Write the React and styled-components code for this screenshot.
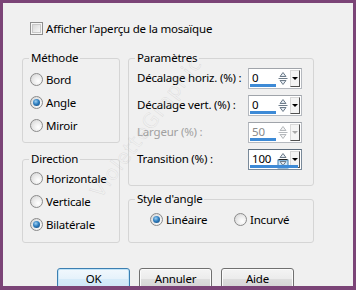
import React from 'react';
import styled, { createGlobalStyle } from 'styled-components';

const GlobalStyle = createGlobalStyle`
  html, body {
    margin: 0;
    padding: 0;
  }
  body {
    font-family: "Noto Sans", "Open Sans", sans-serif;
    font-size: 11.5px;
    letter-spacing: -0.2px;
    color: #000;
  }
`;

const Dialog = styled.div`
  position: relative;
  width: 356px;
  height: 290px;
  box-sizing: border-box;
  border: 3px solid #7b4477;
  border-bottom-width: 4px;
  background: #f0f0f0;
  overflow: hidden;
  display: flex;
  flex-direction: column;
  padding: 19px 0 0 19px;
`;

const CheckRow = styled.label`
  display: flex;
  align-items: center;
  gap: 3px;
  height: 13px;
  margin-left: 8px;
  line-height: 13px;
`;

const CheckBox = styled.span`
  width: 13px;
  height: 13px;
  box-sizing: border-box;
  border: 1px solid #8f8f8f;
  background: linear-gradient(135deg, #cfcfcf 0%, #f2f2f2 70%, #ffffff 100%);
  box-shadow: inset 0 0 0 1px #f6f6f6, inset 0 0 0 2px #c8c8c8;
`;

const Columns = styled.div`
  display: flex;
  gap: 8px;
  margin-top: 15px;
`;

const Column = styled.div`
  width: ${(p) => p.w}px;
  display: flex;
  flex-direction: column;
  gap: ${(p) => p.gap}px;
`;

const Group = styled.fieldset`
  margin: 0;
  padding: 0;
  min-width: 0;
  box-sizing: border-box;
  height: ${(p) => p.h}px;
  border: 1px solid #d5d5d5;
  border-radius: 3px;
`;

const Legend = styled.legend`
  margin-left: 6px;
  padding: 0 2px;
  line-height: 16px;
`;

const RadioList = styled.div`
  display: flex;
  flex-direction: ${(p) => (p.row ? 'row' : 'column')};
  padding: ${(p) => p.pad};
`;

const RadioRow = styled.label`
  display: flex;
  align-items: center;
  gap: 3px;
  height: 23px;
  width: ${(p) => (p.w ? `${p.w}px` : 'auto')};
`;

const RadioCircle = styled.span`
  position: relative;
  width: 13px;
  height: 13px;
  box-sizing: border-box;
  border-radius: 50%;
  border: 1px solid #8b8b8b;
  background: radial-gradient(circle at 65% 65%, #ffffff 0%, #ececec 45%, #cfcfcf 100%);
  flex-shrink: 0;

  &::after {
    content: '';
    display: ${(p) => (p.checked ? 'block' : 'none')};
    position: absolute;
    left: 2px;
    top: 2px;
    width: 7px;
    height: 7px;
    border-radius: 50%;
    background: radial-gradient(circle at 40% 35%, #9fd0f2 0%, #2f7fc0 45%, #123f70 100%);
  }
`;

const ParamList = styled.div`
  display: flex;
  flex-direction: column;
  gap: 6px;
  padding: 2px 11px 0 8px;
`;

const ParamRow = styled.div`
  display: flex;
  align-items: center;
  justify-content: space-between;
  height: 21px;
  color: ${(p) => (p.disabled ? '#a0a0a0' : '#000')};
`;

const ParamLabel = styled.span`
  margin-top: -3px;
  white-space: nowrap;
`;

const SpinBox = styled.div`
  position: relative;
  display: flex;
  width: 54px;
  height: 21px;
  box-sizing: border-box;
  border: 1px solid ${(p) => (p.focused ? '#7a8a9a' : '#b5b9bf')};
  border-top-color: ${(p) => (p.focused ? '#5c6c7c' : '#a0a4aa')};
  background: #fff;

  &::after {
    content: '';
    position: absolute;
    left: 1px;
    bottom: 1px;
    width: ${(p) => (p.focused ? 48 : 26)}px;
    height: 3px;
    background: #3d8ad6;
  }
`;

const SpinValue = styled.span`
  flex: 1;
  padding-left: 3px;
  line-height: 17px;
  color: ${(p) => (p.disabled ? '#8a8a8a' : '#000')};
`;

const Arrows = styled.svg`
  width: 12px;
  height: 19px;
  flex-shrink: 0;
`;

const DropButton = styled.span`
  display: flex;
  align-items: center;
  justify-content: center;
  width: 10px;
  height: 17px;
  margin: 1px;
  box-sizing: border-box;
  border: 1px solid #d8d8d8;
  border-right-color: #505050;
  border-bottom-color: #505050;
  background: #f4f4f4;

  &::before {
    content: '';
    border-left: 3px solid transparent;
    border-right: 3px solid transparent;
    border-top: 3px solid ${(p) => (p.disabled ? '#a8a8a8' : '#000')};
  }
`;

const ButtonBar = styled.div`
  display: flex;
  gap: 9px;
  margin: 25px 0 0 35px;
`;

const Button = styled.button`
  width: 73px;
  height: 21px;
  padding: 0;
  font-family: "Noto Sans", "Open Sans", sans-serif;
  font-size: 11.5px;
  letter-spacing: -0.2px;
  color: #000;
  border-radius: 3px;
  border: 1px solid ${(p) => (p.primary ? '#3c7fb1' : '#707070')};
  background: ${(p) =>
    p.primary
      ? 'linear-gradient(#f1f8fd 0%, #e6f2fb 50%, #d6ebf9 50%, #cfe6f7 100%)'
      : 'linear-gradient(#f4f4f4 0%, #ececec 50%, #dedede 50%, #d4d4d4 100%)'};
  box-shadow: inset 0 0 0 1px ${(p) => (p.primary ? '#bfe3f8' : '#fbfbfb')};
`;

const Watermark = styled.span`
  position: absolute;
  left: 143px;
  top: 124px;
  transform: translate(-50%, -50%) rotate(-53deg);
  font-family: "DejaVu Sans", sans-serif;
  font-size: 20px;
  letter-spacing: 1px;
  color: transparent;
  -webkit-text-stroke: 0.5px rgba(150, 150, 150, 0.22);
  white-space: nowrap;
  pointer-events: none;
`;

const Radio = ({ checked, children, w }) => (
  <RadioRow w={w}>
    <RadioCircle checked={checked} />
    {children}
  </RadioRow>
);

const SpinArrows = ({ disabled, active }) => {
  const stroke = disabled ? '#b4b8bc' : '#6e7c8a';
  const fill = disabled ? '#f2f2f2' : '#e3eaf1';
  return (
    <Arrows viewBox="0 0 12 19">
      {active && <rect x="1" y="10" width="10" height="8" fill="#cde6f8" stroke="#3c7fb1" strokeWidth="1" />}
      <polygon points="3,7.5 9,7.5 6,3.5" fill={fill} stroke={stroke} strokeWidth="1" />
      <line x1="1.5" y1="9.5" x2="10.5" y2="9.5" stroke={active ? '#222' : stroke} strokeWidth="1" />
      <polygon points="3,11.5 9,11.5 6,15.5" fill={fill} stroke={stroke} strokeWidth="1" />
    </Arrows>
  );
};

const Spin = ({ value, disabled, focused }) => (
  <SpinBox focused={focused}>
    <SpinValue disabled={disabled}>{value}</SpinValue>
    <SpinArrows disabled={disabled} active={focused} />
    <DropButton disabled={disabled} />
  </SpinBox>
);

const params = [
  { label: 'Décalage horiz. (%) :', value: '0' },
  { label: 'Décalage vert. (%) :', value: '0' },
  { label: 'Largeur (%) :', value: '50', disabled: true },
  { label: 'Transition (%) :', value: '100', focused: true },
];

export default function App() {
  return (
    <>
      <GlobalStyle />
      <Dialog>
        <CheckRow>
          <CheckBox />
          Afficher l'aperçu de la mosaïque
        </CheckRow>

        <Columns>
          <Column w={98} gap={8}>
            <Group h={93}>
              <Legend>Méthode</Legend>
              <RadioList pad="2px 0 0 7px">
                <Radio>Bord</Radio>
                <Radio checked>Angle</Radio>
                <Radio>Miroir</Radio>
              </RadioList>
            </Group>
            <Group h={92}>
              <Legend>Direction</Legend>
              <RadioList pad="0 0 0 7px">
                <Radio>Horizontale</Radio>
                <Radio>Verticale</Radio>
                <Radio checked>Bilatérale</Radio>
              </RadioList>
            </Group>
          </Column>

          <Column w={186} gap={5}>
            <Group h={136}>
              <Legend>Paramètres</Legend>
              <ParamList>
                {params.map((p) => (
                  <ParamRow key={p.label} disabled={p.disabled}>
                    <ParamLabel>{p.label}</ParamLabel>
                    <Spin value={p.value} disabled={p.disabled} focused={p.focused} />
                  </ParamRow>
                ))}
              </ParamList>
            </Group>
            <Group h={52}>
              <Legend>Style d'angle</Legend>
              <RadioList row pad="1px 0 0 21px">
                <Radio checked w={84}>Linéaire</Radio>
                <Radio>Incurvé</Radio>
              </RadioList>
            </Group>
          </Column>
        </Columns>

        <ButtonBar>
          <Button primary>OK</Button>
          <Button>Annuler</Button>
          <Button>Aide</Button>
        </ButtonBar>

        <Watermark>VioletteGraphic</Watermark>
      </Dialog>
    </>
  );
}
